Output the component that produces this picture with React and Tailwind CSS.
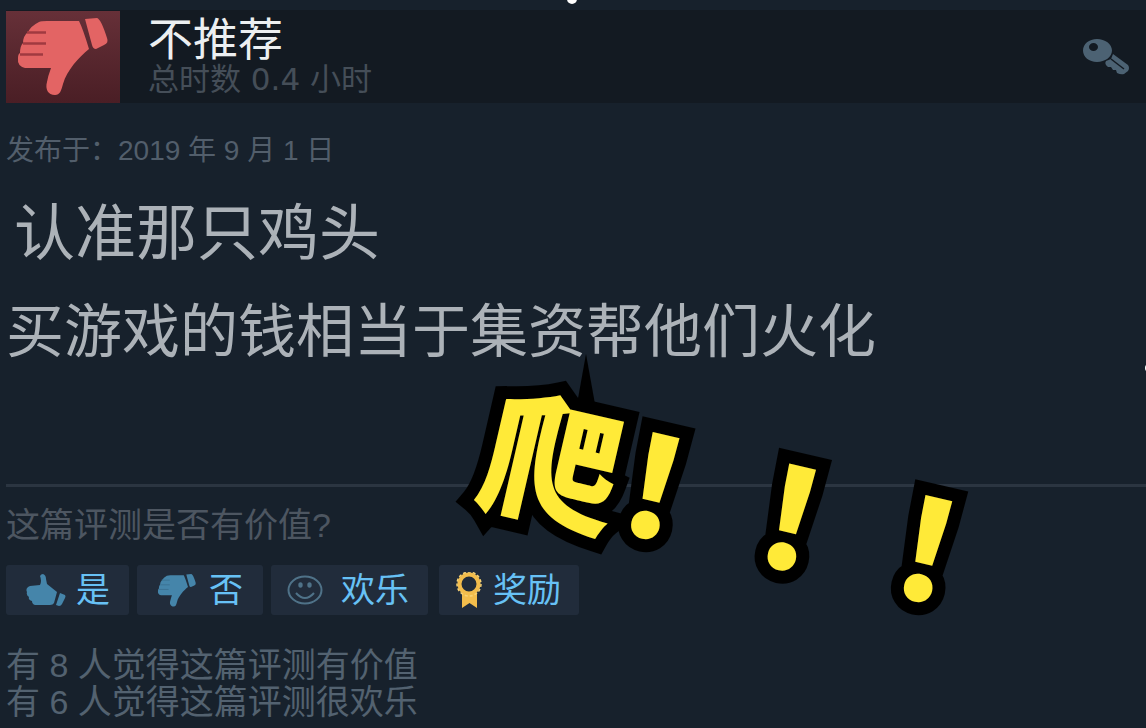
// ReviewCard.jsx
import React from "react";

function ThumbDown({ className, dark }) {
  return (
    <svg viewBox="0 0 92 78" className={className} fill="currentColor" aria-hidden="true">
      <path d="M22 4 Q24 3 30 3 L62 3 Q66 11 72 31 C62 39 50 52 46 66 C44 73 43 77 38 77 C31 77 28 71 30 64 Q31 58 34 50 L8 50 Q0 48 1 40 Q1 36 3 35 Q3 28 6 25 Q6 18 11 14 Q14 8 22 4 Z" />
      <path d="M68 1 L80 0 Q84 1 90 20 Q92 25 87 27 L79 31 Q76 31 75 27 Z" />
      <g stroke={dark} strokeWidth="2.5">
        <path d="M10 14.500 H29" />
        <path d="M6 25.500 H29" />
        <path d="M3 36.500 H26" />
      </g>
    </svg>
  );
}

function ThumbUp({ className }) {
  return (
    <svg viewBox="0 0 40 32" className={className} fill="currentColor" aria-hidden="true">
      <path d="M14 2 Q15 0 17 0 Q20 1 20 5 L21 10 Q26 14 31 18 L28 29 Q27 31 24 31 L9 31 Q6 30 6 27 Q2 26 3 23 Q0 21 1 18 Q-1 14 4 12 L14 11 Q16 7 14 2 Z" />
      <path d="M34 19 L39 21 Q40 22 39 24 L36 30 Q35 32 33 32 L30 31 Z" />
    </svg>
  );
}

function KeyIcon({ className }) {
  return (
    <svg viewBox="0 0 48 38" className={className} aria-hidden="true">
      <path
        fillRule="evenodd"
        fill="currentColor"
        d="M15 1 C23 1 30 6 30 12.500 C30 19 23 24 15 24 C7 24 1 19 1 12.500 C1 6 7 1 15 1 Z M11.500 5 A4.500 4 0 1 0 11.500 13 A4.500 4 0 1 0 11.500 5 Z"
      />
      <path
        fill="currentColor"
        d="M31 16 L46 27 Q48 30 46 33 L42 36 Q39 37 35 35 L34 32 L31 32 L29 29 L26 29 Q22 26 24 23 L29 21 Z"
      />
      <path d="M29 21 L42 31" stroke="#131a22" strokeWidth="1.500" />
    </svg>
  );
}

function Smiley({ className }) {
  return (
    <svg viewBox="0 0 36 30" className={className} fill="none" stroke="currentColor" strokeWidth="2" aria-hidden="true">
      <ellipse cx="18" cy="15" rx="16.500" ry="13.500" />
      <path d="M9 18 Q18 28 27 18" />
      <ellipse cx="13.500" cy="10" rx="1.200" ry="1.800" fill="currentColor" />
      <ellipse cx="22.500" cy="10" rx="1.200" ry="1.800" fill="currentColor" />
    </svg>
  );
}

function Ribbon({ className }) {
  return (
    <svg viewBox="0 0 28 36" className={className} aria-hidden="true">
      <path d="M7 21 H22 V36 L14.500 31 L7 36 Z" fill="#f3bd4c" />
      <circle cx="14" cy="12" r="9.500" fill="#212c3a" stroke="#f3bd4c" strokeWidth="4" />
      <circle cx="14" cy="12" r="12" fill="none" stroke="#f8d375" strokeWidth="1.500" strokeDasharray="3 2" />
    </svg>
  );
}

function VoteButton({ icon, label, className }) {
  return (
    <button className={`flex h-[50px] items-center rounded-[3px] bg-[#212c3b] text-[34px] leading-none text-[#67c1f5] ${className}`}>
      {icon}
      {label}
    </button>
  );
}

export default function ReviewCard() {
  return (
    <div className="relative min-h-screen overflow-hidden bg-[#17212c] pt-[10px] font-['Liberation_Sans','Noto_Sans_CJK_SC',sans-serif]">
      {/* Header */}
      <header className="ml-[6px] flex h-[93px] items-center bg-[#131a22]">
        <div className="flex h-[92px] w-[114px] shrink-0 items-center justify-center bg-linear-to-b from-[#663038] to-[#4a1e25]">
          <ThumbDown className="h-[78px] w-[92px] text-[#e36464]" dark="#a03a40" />
        </div>
        <div className="ml-7 flex-1">
          <h1 className="text-[45px] leading-[44px] text-[#eceff1]">不推荐</h1>
          <p className="font-['DejaVu_Sans','Noto_Sans_CJK_SC',sans-serif] text-[31px] leading-[32px] text-[#454e58]">
            总时数 0.4 小时
          </p>
        </div>
        <KeyIcon className="mr-4 h-[38px] w-12 text-[#4c6273]" />
      </header>

      {/* Review text */}
      <main className="pl-[6px]">
        <p className="mt-7 text-[28px] leading-10 text-[#525e6b]">发布于：2019 年 9 月 1 日</p>
        <p className="mt-5 pl-2 text-[61px] leading-[86px] text-[#acb2b8]">认准那只鸡头</p>
        <p className="mt-3 text-[58px] leading-[86px] whitespace-nowrap text-[#acb2b8]">买游戏的钱相当于集资帮他们火化</p>
      </main>

      {/* Votes */}
      <footer className="mt-[109px] ml-[6px] border-t-[3px] border-[#2b3541]">
        <p className="mt-4 text-[34px] leading-[44px] text-[#4d5661]">这篇评测是否有价值?</p>
        <div className="mt-[18px] flex">
          <VoteButton
            className="w-[123px] pl-5"
            icon={<ThumbUp className="mr-2.5 h-8 w-10 text-[#4585aa]" />}
            label="是"
          />
          <VoteButton
            className="ml-2 w-[126px] pl-5"
            icon={<ThumbDown className="mr-3 h-[33px] w-10 text-[#4585aa]" dark="#3c7496" />}
            label="否"
          />
          <VoteButton
            className="ml-2 w-[157px] pl-4"
            icon={<Smiley className="mr-[18px] h-[30px] w-9 text-[#4f7288]" />}
            label="欢乐"
          />
          <VoteButton
            className="ml-[11px] w-[140px] pl-4"
            icon={<Ribbon className="mr-2.5 h-9 w-7" />}
            label="奖励"
          />
        </div>
        <div className="mt-8 text-[34px] leading-[37px] text-[#536270]">
          <p>有 8 人觉得这篇评测有价值</p>
          <p>有 6 人觉得这篇评测很欢乐</p>
        </div>
      </footer>

      {/* Sticker text over the review */}
      <svg viewBox="0 0 18 50" className="absolute top-[354px] left-[577px] h-[50px] w-[18px]" aria-hidden="true">
        <path d="M9 0 L18 50 H0 Z" fill="#000" />
      </svg>
      <p className="absolute top-[384px] left-[484px] origin-[70px_70px] rotate-[13deg] font-['Noto_Sans_CJK_SC',sans-serif] text-[140px] leading-[140px] font-black whitespace-nowrap text-[#ffea38] [-webkit-text-stroke:26px_#000] [paint-order:stroke_fill]">
        爬！！！
      </p>

      {/* Selection handles */}
      <span className="absolute -top-1.5 left-[567px] size-2.5 rounded-full bg-white" />
      <span className="absolute top-[364px] -right-[7px] size-2 rounded-full bg-white" />
    </div>
  );
}
